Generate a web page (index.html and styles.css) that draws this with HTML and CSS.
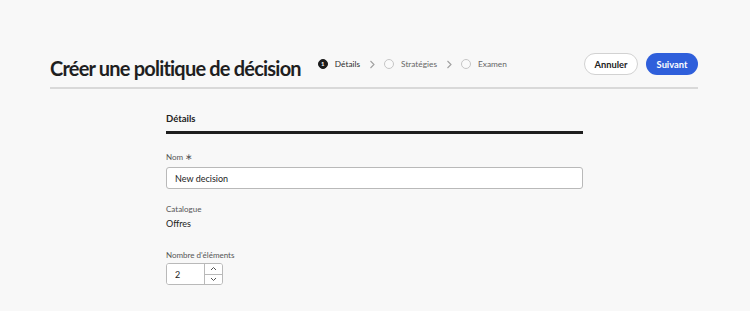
FILE: index.html
```html
<!DOCTYPE html>
<html lang="fr">
<head>
  <meta charset="UTF-8" />
  <meta name="viewport" content="width=device-width, initial-scale=1.0"/>
  <title>Créer une politique de décision</title>
  <link rel="stylesheet" href="styles.css">
</head>
<body>

  <!-- Header -->
  <header class="page-header">
    <h1>Créer une politique de décision</h1>

    <ol class="steps">
      <li class="step active"><span class="dot">1</span>Détails</li>
      <li class="chev"><svg width="6" height="9" viewBox="0 0 6 9"><path d="M1.5 1 5 4.5 1.5 8" fill="none" stroke="#a0a0a0" stroke-width="1.1"/></svg></li>
      <li class="step"><span class="dot"></span>Stratégies</li>
      <li class="chev"><svg width="6" height="9" viewBox="0 0 6 9"><path d="M1.5 1 5 4.5 1.5 8" fill="none" stroke="#a0a0a0" stroke-width="1.1"/></svg></li>
      <li class="step"><span class="dot"></span>Examen</li>
    </ol>

    <div class="actions">
      <button class="btn btn-secondary">Annuler</button>
      <button class="btn btn-primary">Suivant</button>
    </div>
  </header>

  <!-- Form -->
  <main class="form">
    <h2>Détails</h2>

    <div class="field field-name">
      <label for="nom">Nom <span class="req">∗</span></label>
      <input type="text" id="nom" value="New decision" />
    </div>

    <div class="field field-catalog">
      <span class="label">Catalogue</span>
      <span class="value">Offres</span>
    </div>

    <div class="field field-count">
      <label for="count">Nombre d'éléments</label>
      <div class="number">
        <input type="text" id="count" value="2" />
        <div class="spin">
          <button><svg width="7" height="5" viewBox="0 0 7 5"><path d="M1 4 3.5 1.5 6 4" fill="none" stroke="#555" stroke-width="1"/></svg></button>
          <button><svg width="7" height="5" viewBox="0 0 7 5"><path d="M1 1 3.5 3.5 6 1" fill="none" stroke="#555" stroke-width="1"/></svg></button>
        </div>
      </div>
    </div>
  </main>

</body>
</html>
```

FILE: styles.css
```css
/* General */
body {
  margin: 0;
  background: #f8f8f8;
  font-family: Lato, "Noto Sans", sans-serif;
  color: #222;
}

/* Header */
.page-header {
  display: flex;
  align-items: flex-start;
  margin: 0 52px 0 50px;
  padding: 56px 0 7px;
  border-bottom: 2px solid #d9d9d9;
}

.page-header h1 {
  margin: 0;
  flex-shrink: 0;
  white-space: nowrap;
  font-size: 20px;
  font-weight: 700;
  letter-spacing: -0.8px;
  line-height: 24px;
  color: #1f1f1f;
}

.steps {
  display: flex;
  align-items: center;
  list-style: none;
  margin: 1px 0 0 17px;
  padding: 0;
  font-size: 8.3px;
  line-height: 14px;
  color: #666;
}

.step {
  display: flex;
  align-items: center;
  gap: 7px;
  white-space: nowrap;
}

.step.active {
  color: #2c2c2c;
}

.dot {
  width: 8px;
  height: 8px;
  border: 1.2px solid #c6c6c6;
  border-radius: 50%;
  background: #fafafa;
  box-sizing: content-box;
  font-size: 6px;
  line-height: 8px;
  text-align: center;
  color: #fff;
  font-weight: 700;
}

.step.active .dot {
  background: #1c1c1c;
  border-color: #1c1c1c;
}

.chev {
  display: flex;
  margin: 0 9px 0 9px;
}

.actions {
  display: flex;
  gap: 8px;
  margin-left: auto;
  margin-top: -3px;
}

.btn {
  height: 22px;
  border-radius: 11px;
  font-family: Lato, "Noto Sans", sans-serif;
  font-size: 9.3px;
  font-weight: 700;
  cursor: pointer;
}

.btn-secondary {
  width: 54px;
  background: #fff;
  border: 1.5px solid #d2d2d2;
  color: #222;
}

.btn-primary {
  width: 52px;
  background: #2f5fdb;
  border: none;
  color: #fff;
}

/* Form */
.form {
  width: 417px;
  margin: 23px 0 0 166px;
}

.form h2 {
  margin: 0;
  font-size: 9.5px;
  font-weight: 700;
  line-height: 14px;
  padding-bottom: 5px;
  border-bottom: 3px solid #1e1e1e;
}

.field {
  display: flex;
  flex-direction: column;
  align-items: flex-start;
}

.field label,
.field .label {
  font-size: 8px;
  color: #555;
  line-height: 10px;
}

.req {
  font-size: 9px;
}

.field-name {
  margin-top: 18px;
}

.field-name label {
  margin-bottom: 5px;
}

.field-catalog {
  margin-top: 15px;
}

.field-catalog .label {
  margin-bottom: 4px;
}

.field-count {
  margin-top: 20px;
}

.field-count label {
  margin-bottom: 3px;
}

.field input {
  box-sizing: border-box;
  width: 100%;
  height: 22px;
  border: 1px solid #b9b9b9;
  border-radius: 3px;
  background: #fff;
  padding: 0 8px;
  font-family: Lato, "Noto Sans", sans-serif;
  font-size: 9px;
  color: #222;
}

.value {
  font-size: 9px;
  color: #222;
  line-height: 12px;
}

.number {
  display: flex;
  width: 57px;
  height: 22px;
  box-sizing: border-box;
  border: 1px solid #b9b9b9;
  border-radius: 3px;
  background: #fff;
  overflow: hidden;
}

.number input {
  border: none;
  height: 100%;
  flex: 1;
  width: 0;
  padding: 0 8px;
  border-radius: 0;
}

.spin {
  display: flex;
  flex-direction: column;
  width: 17px;
  border-left: 1px solid #b9b9b9;
}

.spin button {
  flex: 1;
  border: none;
  background: #fff;
  padding: 0;
  display: flex;
  align-items: center;
  justify-content: center;
}

.spin button + button {
  border-top: 1px solid #b9b9b9;
}
```
